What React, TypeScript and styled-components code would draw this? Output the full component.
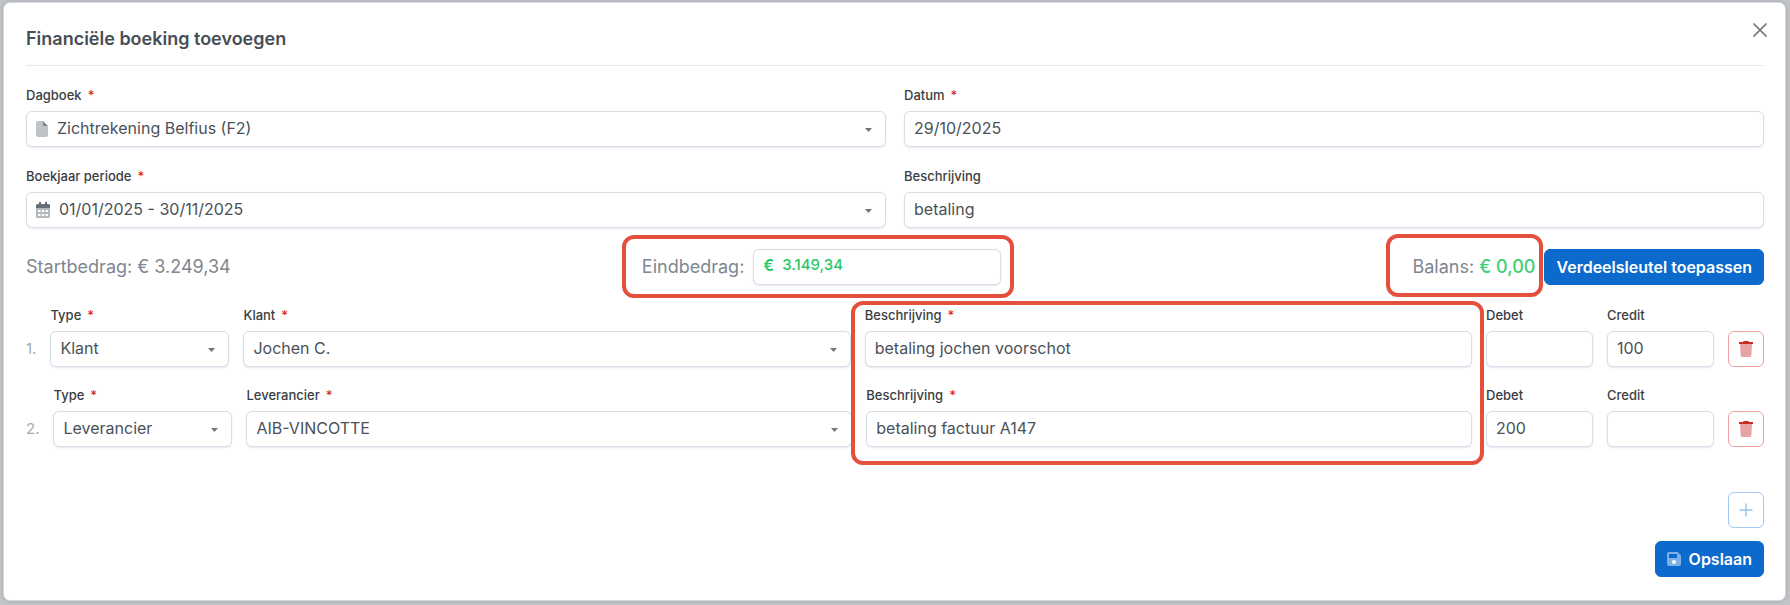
import React, { useId, useState } from "react";
import styled, { createGlobalStyle, css } from "styled-components";

const GlobalStyle = createGlobalStyle`
  *, *::before, *::after { box-sizing: border-box; }
  body {
    margin: 0;
    min-height: 100vh;
    background: #c3c5c8;
    font-family: Inter, "Liberation Sans", sans-serif;
    font-size: 16px;
    color: #4b5158;
  }
  button, input, select { font: inherit; color: inherit; }
`;

const Page = styled.main`
  padding: 2px 4px 4px 3px;
`;

const Dialog = styled.section`
  padding: 0 21px 23px 22px;
  background: #fff;
  border: 1px solid #d3dce6;
  border-radius: 7px;
  box-shadow: 0 0 4px rgba(70, 75, 85, 0.25);
`;

const Header = styled.header`
  display: flex;
  justify-content: space-between;
  align-items: flex-start;
  padding: 17px 0 14px;
  border-bottom: 1px solid #e6e7e9;
`;

const Title = styled.h1`
  margin: 7px 0 0;
  font-size: 18px;
  line-height: 24px;
  font-weight: 600;
  color: #474d54;
`;

const CloseButton = styled.button`
  display: grid;
  place-items: center;
  width: 20px;
  height: 20px;
  margin-right: -6px;
  padding: 0;
  border: 0;
  background: none;
  color: #6b737d;
  cursor: pointer;
`;

const FormGrid = styled.div`
  display: grid;
  grid-template-columns: 1fr 1fr;
  gap: 20px 18px;
  padding-top: 20px;
`;

type FieldSize = "grow" | "type" | "amount";

const fieldSizes = {
  grow: css`flex: 1 1 0;`,
  type: css`flex: 0 0 179px;`,
  amount: css`flex: 0 0 107px;`,
};

const FieldBox = styled.div<{ $size: FieldSize }>`
  position: relative;
  display: flex;
  flex-direction: column;
  gap: 7px;
  min-width: 0;
  ${({ $size }) => fieldSizes[$size]}
`;

const Label = styled.label`
  font-size: 13px;
  line-height: 18px;
  font-weight: 500;
  color: #3a3d42;
`;

const Required = styled.span`
  margin-left: 6px;
  color: #dc2626;
`;

const controlFrame = css`
  height: 36px;
  border: 1px solid #d6dee8;
  border-radius: 6px;
  background: #fff;
  box-shadow: 0 1px 2px rgba(90, 110, 140, 0.16);
`;

const TextInput = styled.input`
  ${controlFrame}
  width: 100%;
  padding: 0 9px 2px;
  outline: none;
`;

const SelectWrap = styled.div`
  position: relative;
`;

const Select = styled.select<{ $indent: number }>`
  ${controlFrame}
  display: block;
  width: 100%;
  padding: 0 30px 2px ${({ $indent }) => $indent}px;
  appearance: none;
  outline: none;
`;

const LeadingIcon = styled.span`
  position: absolute;
  left: 10px;
  top: 10px;
  display: flex;
  pointer-events: none;
`;

const Caret = styled.svg`
  position: absolute;
  right: 14px;
  top: 17px;
  pointer-events: none;
`;

const Summary = styled.div`
  display: flex;
  justify-content: space-between;
  align-items: center;
  padding: 21px 0;
  font-size: 18px;
  line-height: 24px;
  color: #80868f;
`;

const SummaryGroup = styled.div`
  position: relative;
  display: flex;
  align-items: center;
  gap: 9px;
`;

const AmountBox = styled.div`
  ${controlFrame}
  display: flex;
  align-items: center;
  gap: 8px;
  width: 248px;
  padding: 0 9px 4px;
  font-size: 15px;
  font-weight: 500;
  color: #2cc765;
`;

const Currency = styled.span`
  font-size: 16px;
  font-weight: 600;
`;

const AmountInput = styled.input`
  flex: 1;
  min-width: 0;
  padding: 0;
  border: 0;
  outline: none;
  background: none;
`;

const Positive = styled.span`
  font-weight: 500;
  color: #3fcf74;
`;

const BalanceText = styled.span`
  position: relative;
`;

const highlight = css`
  position: absolute;
  z-index: 1;
  border: 4px solid #e5503c;
  border-radius: 12px;
  pointer-events: none;
`;

const EndAmountHighlight = styled.span`
  ${highlight}
  inset: -14px -13px -13px -20px;
`;

const BalanceHighlight = styled.span`
  ${highlight}
  inset: -21px -8px -18px -26px;
`;

const LinesHighlight = styled.span`
  ${highlight}
  top: -5px;
  left: -14px;
  right: -12px;
  height: 164px;
`;

const PrimaryButton = styled.button`
  display: inline-flex;
  align-items: center;
  gap: 8px;
  height: 36px;
  padding: 0 11px;
  border: 1px solid #0b6acb;
  border-radius: 6px;
  background: #0b6acb;
  color: #fff;
  font-size: 16px;
  font-weight: 600;
  white-space: nowrap;
  cursor: pointer;
`;

const IconButton = styled.button<{ $tone: "danger" | "add" }>`
  display: grid;
  place-items: center;
  flex: none;
  width: 36px;
  height: 36px;
  padding: 0;
  border: 1px solid ${({ $tone }) => ($tone === "danger" ? "#f0a0a0" : "#9fc8f2")};
  border-radius: 6px;
  background: #fff;
  color: ${({ $tone }) => ($tone === "danger" ? "#c92a2a" : "#9dc3ec")};
  cursor: pointer;
`;

const Lines = styled.ol`
  display: grid;
  gap: 19px;
  margin: 0;
  padding: 0;
  list-style: none;
`;

const Line = styled.li`
  display: flex;
  align-items: flex-end;
  gap: 14px;
`;

const LineNumber = styled.span`
  font-size: 15px;
  line-height: 36px;
  color: #a6abb2;
`;

const Footer = styled.footer`
  display: flex;
  flex-direction: column;
  align-items: flex-end;
  gap: 13px;
  padding-top: 45px;
`;

function FileIcon() {
  return (
    <svg width="12" height="16" viewBox="0 0 12 16" aria-hidden="true">
      <path d="M2 0h5v4a1 1 0 0 0 1 1h4v9a2 2 0 0 1-2 2H2a2 2 0 0 1-2-2V2a2 2 0 0 1 2-2z" fill="#bfc3c7" />
      <path d="M7 0l5 5H8a1 1 0 0 1-1-1z" fill="#7d848c" />
    </svg>
  );
}

function CalendarIcon() {
  return (
    <svg width="14" height="16" viewBox="0 0 14 16" aria-hidden="true">
      <path d="M0 6h14v8.500a1.500 1.500 0 0 1-1.500 1.500h-11A1.500 1.500 0 0 1 0 14.500z" fill="#b4b9be" />
      <path d="M2 8h2.500v2H2zM5.800 8h2.500v2H5.800zM9.500 8H12v2H9.500zM2 12h2.500v2H2zM5.800 12h2.500v2H5.800zM9.500 12H12v2H9.500z" fill="#fff" />
      <path d="M3 0h2v2h4V0h2v2h1.500A1.500 1.500 0 0 1 14 3.500V6H0V3.500A1.500 1.500 0 0 1 1.500 2H3z" fill="#656d76" />
    </svg>
  );
}

function TrashIcon() {
  return (
    <svg width="14" height="16" viewBox="0 0 14 16" aria-hidden="true">
      <path d="M1 3h12l-.7 11.600a1.500 1.500 0 0 1-1.500 1.400H3.200a1.500 1.500 0 0 1-1.500-1.400z" fill="#e8a3a5" />
      <path d="M0 1h4l.6-1h4.800l.6 1h4v2H0z" fill="currentColor" />
    </svg>
  );
}

function SaveIcon() {
  return (
    <svg width="14" height="14" viewBox="0 0 14 14" aria-hidden="true">
      <path fillRule="evenodd" d="M2 0h8.500L14 3.500V12a2 2 0 0 1-2 2H2a2 2 0 0 1-2-2V2a2 2 0 0 1 2-2zM2 2v4h8V2z" fill="#7db1e8" />
      <circle cx="7" cy="10" r="2" fill="#fff" />
    </svg>
  );
}

interface FieldProps {
  label: string;
  value: string;
  required?: boolean;
  size?: FieldSize;
  children?: React.ReactNode;
}

function TextField({ label, value, required, size = "grow", children }: FieldProps) {
  const id = useId();
  const [text, setText] = useState(value);
  return (
    <FieldBox $size={size}>
      <Label htmlFor={id}>
        {label}
        {required && <Required>*</Required>}
      </Label>
      <TextInput id={id} value={text} onChange={(e) => setText(e.target.value)} />
      {children}
    </FieldBox>
  );
}

interface SelectFieldProps extends FieldProps {
  icon?: React.ReactNode;
  indent?: number;
}

function SelectField({ label, value, required, size = "grow", icon, indent = 9 }: SelectFieldProps) {
  const id = useId();
  return (
    <FieldBox $size={size}>
      <Label htmlFor={id}>
        {label}
        {required && <Required>*</Required>}
      </Label>
      <SelectWrap>
        <Select id={id} $indent={indent} defaultValue={value}>
          <option>{value}</option>
        </Select>
        {icon && <LeadingIcon>{icon}</LeadingIcon>}
        <Caret width="7" height="4" viewBox="0 0 7 4" aria-hidden="true">
          <path d="M0 0h7L3.500 4z" fill="#6f7780" />
        </Caret>
      </SelectWrap>
    </FieldBox>
  );
}

const bookingLines = [
  { type: "Klant", party: "Jochen C.", description: "betaling jochen voorschot", debit: "", credit: "100" },
  { type: "Leverancier", party: "AIB-VINCOTTE", description: "betaling factuur A147", debit: "200", credit: "" },
];

export default function App() {
  const endAmountId = useId();
  return (
    <>
      <GlobalStyle />
      <Page>
        <Dialog role="dialog" aria-labelledby="dialog-title">
          <Header>
            <Title id="dialog-title">Financiële boeking toevoegen</Title>
            <CloseButton type="button" aria-label="Sluiten">
              <svg width="14" height="14" viewBox="0 0 14 14" aria-hidden="true">
                <path d="M1 1l12 12M13 1L1 13" stroke="currentColor" strokeWidth="1.700" strokeLinecap="round" />
              </svg>
            </CloseButton>
          </Header>

          <FormGrid>
            <SelectField label="Dagboek" required value="Zichtrekening Belfius (F2)" icon={<FileIcon />} indent={30} />
            <TextField label="Datum" required value="29/10/2025" />
            <SelectField label="Boekjaar periode" required value="01/01/2025 - 30/11/2025" icon={<CalendarIcon />} indent={32} />
            <TextField label="Beschrijving" value="betaling" />
          </FormGrid>

          <Summary>
            <span>Startbedrag: € 3.249,34</span>
            <SummaryGroup>
              <label htmlFor={endAmountId}>Eindbedrag:</label>
              <AmountBox>
                <Currency>€</Currency>
                <AmountInput id={endAmountId} defaultValue="3.149,34" />
              </AmountBox>
              <EndAmountHighlight />
            </SummaryGroup>
            <SummaryGroup>
              <BalanceText>
                Balans: <Positive>€ 0,00</Positive>
                <BalanceHighlight />
              </BalanceText>
              <PrimaryButton type="button">Verdeelsleutel toepassen</PrimaryButton>
            </SummaryGroup>
          </Summary>

          <Lines>
            {bookingLines.map((line, index) => (
              <Line key={line.party}>
                <LineNumber>{index + 1}.</LineNumber>
                <SelectField label="Type" required size="type" value={line.type} />
                <SelectField label={line.type} required value={line.party} />
                <TextField label="Beschrijving" required value={line.description}>
                  {index === 0 && <LinesHighlight />}
                </TextField>
                <TextField label="Debet" size="amount" value={line.debit} />
                <TextField label="Credit" size="amount" value={line.credit} />
                <IconButton type="button" $tone="danger" aria-label="Regel verwijderen">
                  <TrashIcon />
                </IconButton>
              </Line>
            ))}
          </Lines>

          <Footer>
            <IconButton type="button" $tone="add" aria-label="Regel toevoegen">
              <svg width="14" height="14" viewBox="0 0 14 14" aria-hidden="true">
                <path d="M7 1v12M1 7h12" stroke="currentColor" strokeWidth="1.500" strokeLinecap="round" />
              </svg>
            </IconButton>
            <PrimaryButton type="button">
              <SaveIcon />
              Opslaan
            </PrimaryButton>
          </Footer>
        </Dialog>
      </Page>
    </>
  );
}
